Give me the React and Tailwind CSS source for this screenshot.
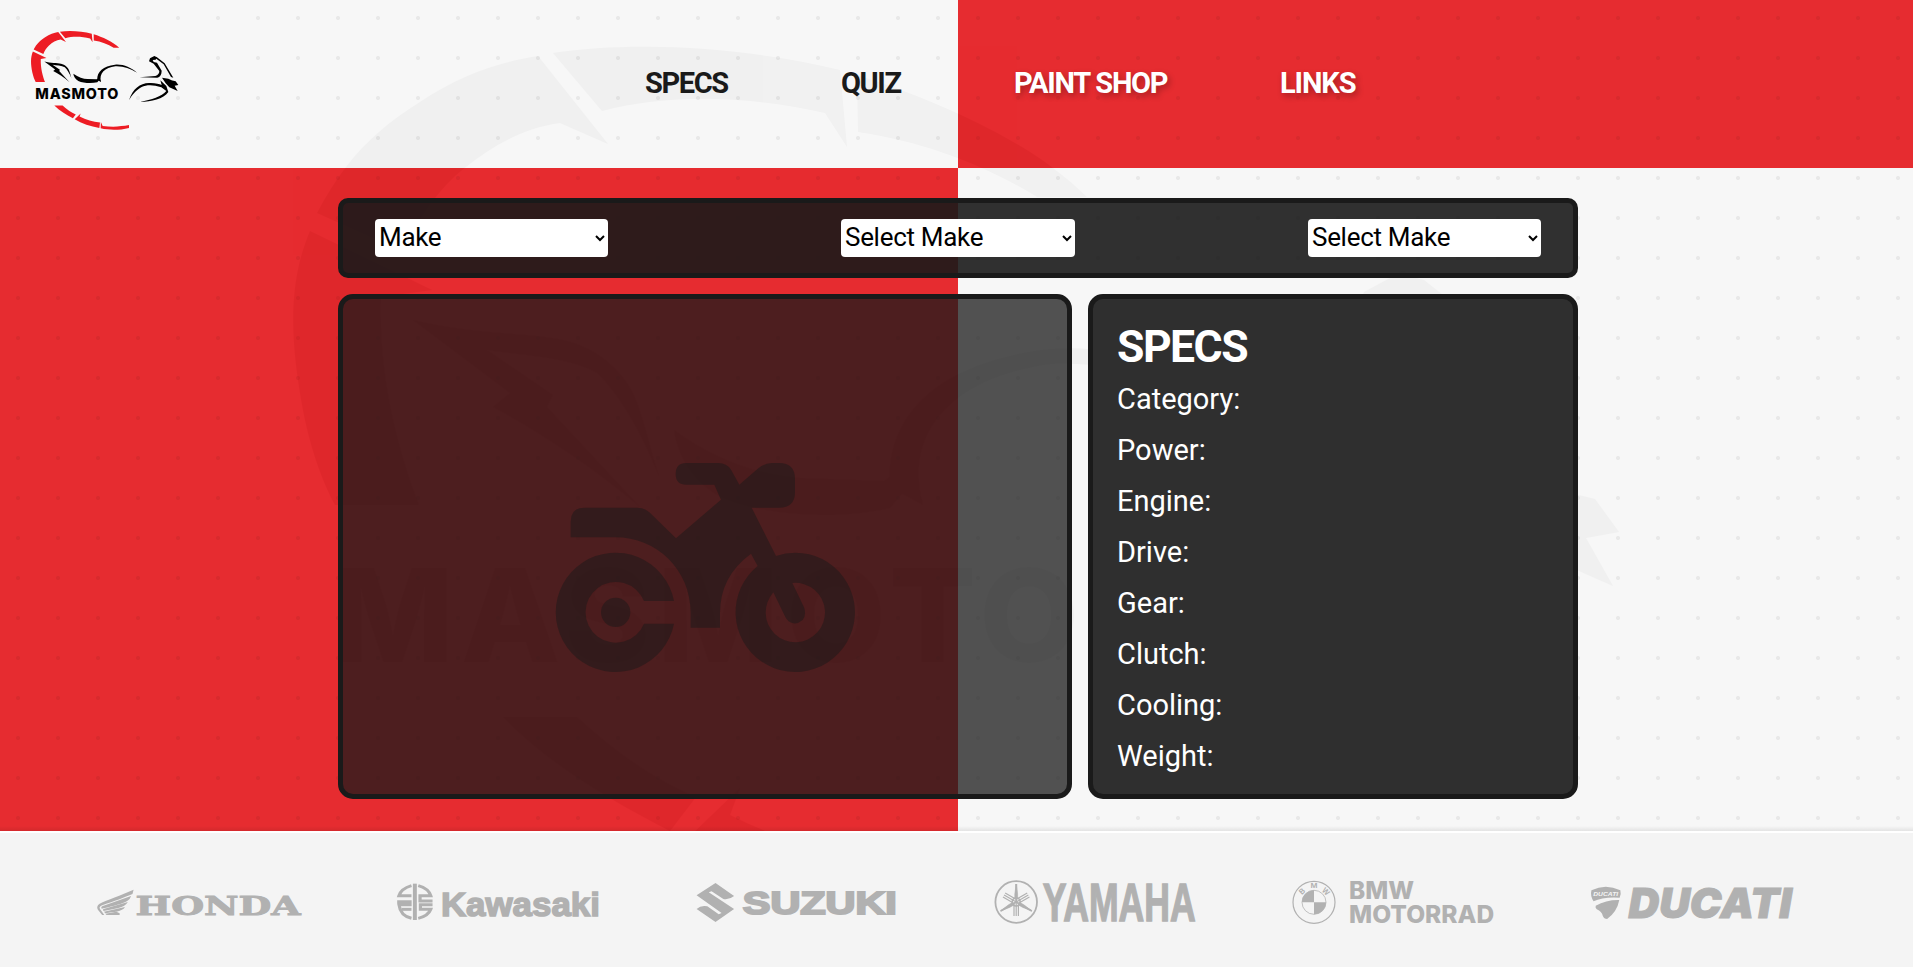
import React from "react";

const navLeft = [
  { label: "SPECS", cls: "w-[82px] tracking-[-1.4px]" },
  { label: "QUIZ", cls: "w-[59px] tracking-[-1.4px]" },
];
const navRight = [
  { label: "PAINT SHOP", cls: "w-[152px] tracking-[-1.25px]" },
  { label: "LINKS", cls: "w-[75px] tracking-[-1.1px]" },
];

const specs = ["Category:", "Power:", "Engine:", "Drive:", "Gear:", "Clutch:", "Cooling:", "Weight:"];

/* Speedometer ring, bike silhouette and wordmark, shared by header and watermark. */
function LogoArt({ ring, ink }) {
  return (
    <>
      <g fill={ring}>
        <path d="M310 231 C287 285 290 345 305 420 C313 456 324 485 335 505 H419 C400 455 378 380 381 297 L432 290 Z" />
        <path d="M317 213 C345 160 375 130 420 102 C460 75 500 62 538 56 L608 144 L560 123 C520 128 485 150 455 176 C430 200 415 225 404 252 Z" />
        <path d="M553 53 C640 40 750 48 840 70 L847 147 L825 113 C750 96 670 93 602 111 Z" />
        <path d="M857 75 C935 100 1030 140 1087 197 H1037 C985 165 925 142 858 132 Z" />
        <path d="M503 717 H577 C615 752 655 780 696 797 L670 831 C610 800 550 765 503 717 Z" />
        <path d="M686 840 L740 788 L730 815 C790 845 850 862 914 870 L908 918 C830 905 750 880 686 840 Z" />
        <path d="M922 864 L938 900 C1020 912 1100 907 1175 893 V918 C1090 940 1000 940 920 922 Z" />
      </g>
      <g fill={ink}>
        <path d="M413 320 C470 334 530 333 563 340 C600 348 628 375 638 405 C648 435 652 455 659 476 C640 430 620 395 597 373 C570 357 520 355 487 350 L553 395 L547 407 L640 507 C590 465 540 432 493 407 L510 393 Z" />
        <g transform="translate(14 -233) scale(3)">
          <path d="M220 221 C235 232 250 236 262 237 L290 238 L297 233 L303 245 L297 241 L292 247 C275 251 250 250 235 243 C226 238 221 229 220 221 Z" />
          <path d="M292 240 C290 215 310 198 345 194 C370 192 392 202 411 218 C390 205 370 198 346 199 C315 203 296 220 303 246 Z" />
          <path d="M419 232 L466 228 C474 226 478 220 478 213 L461 191 L447 184 L450 175 L463 168 L470 173 L467 179 L458 180 L461 186 L471 188 L485 212 C485 224 480 231 472 233 Z" />
          <path d="M462 169 L470 171 L494 190 L520 233 L513 231 L491 193 L466 174 Z" />
          <path d="M486 233 L505 236 L518 242 L498 237 L527 244 L535 255 L524 257 L533 273 L508 262 L497 250 Z" />
          <path d="M387 301 C398 266 420 250 447 249 C465 248 478 252 485 255 L481 241 L499 258 L505 276 C490 297 455 305 420 306 C455 299 485 290 499 273 L484 262 C460 254 440 254 425 261 C408 270 395 286 387 301 Z" />
        </g>
        <text
          x="332"
          y="662"
          fontFamily="Inter, 'Open Sans', sans-serif"
          fontWeight="800"
          fontSize="129"
          textLength="747"
          lengthAdjust="spacing"
        >
          MASMOTO
        </text>
      </g>
    </>
  );
}

function BikeIcon() {
  return (
    <svg viewBox="48 70 897 627" className="mt-[41px] h-[209px] w-[299px] overflow-visible opacity-50" fill="#1a1a1a">
      <path d="M92 293 V246 Q92 204 134 204 H292 Q312 204 328 218 L408 296 L543 180 L523 135 H439 Q407 135 407 103 Q407 70 439 70 H535 Q560 70 573 90 L598 135 L655 86 Q674 70 696 70 H717 Q765 70 765 118 V157 Q765 204 717 204 H635 L708 349 Q736 339 766 339 A179 179 0 1 1 653 379 L633 342 Q540 410 540 520 V564 H452 V520 C452 390 350 293 226 293 Z M700 458 Q677 486 677 519 A89 89 0 1 0 757 430 L792 503 Q800 526 788 541 Q774 553 760 551 Q744 548 736 532 Z" fillRule="evenodd" />
      <path d="M402 484 A179 179 0 1 0 402 552 H312 A91 91 0 1 1 312 484 Z" />
      <circle cx="227" cy="518" r="44" />
    </svg>
  );
}

const sans = "'Liberation Sans', Arial, sans-serif";

function Word({ x, y, size, len, children, ...rest }) {
  return (
    <text x={x} y={y} fontSize={size} textLength={len} lengthAdjust="spacingAndGlyphs" fontFamily={sans} fontWeight="700" {...rest}>
      {children}
    </text>
  );
}

function Brand({ x, children }) {
  return (
    <svg viewBox={`${x} 872 203 60`} className="h-[60px] w-[203px] overflow-visible" fill="#b1b1b1">
      {children}
    </svg>
  );
}

function Brands() {
  return (
    <>
      <Brand x={97}>
        <g transform="translate(80 860) scale(.35714 .33333)">
          <path d="M150 89 C115 106 75 120 55 131 C47 137 46 144 53 153 L62 165 H68 L56 147 C53 141 56 138 64 135 C95 124 125 112 147 102 Z" />
          <path d="M143 108 L64 138 Q57 141 61 146 L66 145 C95 137 118 132 133 122 Q141 117 143 108 Z" />
          <path d="M134 126 L66 147 Q62 149 66 153 C95 147 125 144 134 126 Z" />
          <path d="M126 141 L67 155 L71 160 C95 155 118 156 126 141 Z" />
          <path d="M71 161 L102 155 L111 160 V165 H74 Z" />
        </g>
        <Word x={135.5} y={914.5} size={26} len={165} fontFamily="'DejaVu Serif', serif" stroke="#b1b1b1" strokeWidth="0.9">HONDA</Word>
      </Brand>
      <Brand x={395.6}>
        <g transform="translate(80 860) scale(.35714 .33333)">
          <rect x="931" y="71" width="11" height="109" />
          <g fill="none" stroke="#b1b1b1" strokeWidth="9">
            <path d="M927 77 C908 83 896 94 892 107 H927" />
            <path d="M887 125 H923 V134 H892 C895 160 910 171 927 175" />
            <path d="M927 148 H899" />
            <path d="M946 77 C966 83 977 94 981 107 H951 V123 H986" />
            <path d="M986 134 H952 V148 H981 C977 160 966 170 946 175" />
          </g>
        </g>
        <Word x={440.5} y={915.6} size={34} len={159} stroke="#b1b1b1" strokeWidth="1.5">Kawasaki</Word>
      </Brand>
      <Brand x={694.2}>
        <g transform="translate(660 860) scale(.35714 .33333)">
          <path d="M156 69 L208 108 Q195 120 178 117 L145 94 L137 97 L208 147 L156 186 L103 147 Q115 135 133 139 L165 163 L173 159 L103 106 Z" />
        </g>
        <Word x={743} y={913.5} size={31} len={154} stroke="#b1b1b1" strokeWidth="2">SUZUKI</Word>
      </Brand>
      <Brand x={992.8}>
        <g fill="none" stroke="#b1b1b1">
          <circle cx="1016" cy="902" r="20.8" strokeWidth="1.8" />
          {[0, 120, 240].map((a) => (
            <g key={a} transform={`rotate(${a} 1016 902)`}>
              <path d="M1016 884 V902" strokeWidth="2" />
              <path d="M1014.6 894 L1016 884 L1017.4 894 V899 H1014.6 Z" fill="#b1b1b1" strokeWidth="0.6" />
              <path d="M1013.8 904.5 V916 M1016 902 V916 M1018.2 904.5 V916" strokeWidth="1.2" />
            </g>
          ))}
          <circle cx="1016" cy="902" r="4" strokeWidth="1.6" />
        </g>
        <Word x={1042.5} y={920.8} size={54} len={153} stroke="#b1b1b1" strokeWidth="1.4">YAMAHA</Word>
      </Brand>
      <Brand x={1291.4}>
        <g fill="none" stroke="#b1b1b1">
          <circle cx="1314.4" cy="902.3" r="21" strokeWidth="1.2" />
          <circle cx="1314.4" cy="902.3" r="12" strokeWidth="0.8" />
        </g>
        <path d="M1314.4 902.3 V890.3 A12 12 0 0 0 1302.4 902.3 Z M1314.4 902.3 V914.3 A12 12 0 0 0 1326.4 902.3 Z" />
        <Word x={1311} y={888.3} size={7} len={7}>M</Word>
        <Word x={-2.6} y={2.5} size={8} len={5.2} transform="translate(1302.6 891.3) rotate(-44)">B</Word>
        <Word x={-3.6} y={2.5} size={8} len={7} transform="translate(1326.2 891.6) rotate(44)">W</Word>
        <Word x={1349.5} y={899} size={24} len={65} fontFamily="Inter, sans-serif" fontWeight="800">BMW</Word>
        <Word x={1349.5} y={923} size={24} len={145} fontFamily="Inter, sans-serif" fontWeight="800">MOTORRAD</Word>
      </Brand>
      <Brand x={1590}>
        <g transform="translate(1260 860) scale(.35714 .33333)">
          <path d="M928 91 Q968 70 1009 91 Q1012 103 1007 113 Q960 110 934 124 Q924 108 928 91 Z" />
          <path d="M940 137 Q970 119 1006 120 Q1000 155 972 177 Q963 177 960 168 Q957 155 943 148 Q938 143 940 137 Z" />
          <text x="933" y="108" fill="#f4f4f4" fontFamily={sans} fontWeight="700" fontStyle="italic" fontSize="18" textLength="70" lengthAdjust="spacingAndGlyphs">DUCATI</text>
        </g>
        <Word x={1628.5} y={917.6} size={41} len={163} fontFamily="Inter, sans-serif" fontWeight="900" fontStyle="italic" stroke="#b1b1b1" strokeWidth="1">DUCATI</Word>
      </Brand>
    </>
  );
}

function Picker({ label, width }) {
  return (
    <select
      className={`h-[38px] ${width} rounded-[4px] bg-white pb-[2px] font-[Roboto,sans-serif] text-[26px] leading-[36px] tracking-[-0.3px] text-black`}
      defaultValue={label}
    >
      <option>{label}</option>
    </select>
  );
}

export default function App() {
  return (
    <div className="flex h-[967px] w-full flex-col overflow-hidden bg-[#f4f4f4] font-[Roboto,sans-serif]">
      <div className="relative h-[831px] w-full overflow-hidden">
        <div className="absolute inset-0 grid grid-cols-[958px_1fr] grid-rows-[168px_1fr]">
          <div className="bg-[#f7f7f7]" />
          <div className="bg-[#e62c30]" />
          <div className="bg-[#e62c30]" />
          <div className="bg-[#f7f7f7]" />
        </div>
        <div className="absolute inset-0 bg-[radial-gradient(circle_at_18px_18px,rgba(0,0,0,0.055)_1.6px,transparent_2.4px)] bg-[length:40px_40px]" />
        <svg className="absolute inset-0" width="1913" height="831" viewBox="0 0 1913 831">
          <defs>
            <g id="mark">
              <LogoArt />
            </g>
            <clipPath id="light">
              <path d="M0 0H958V168H0Z M958 168H1913V831H958Z" />
            </clipPath>
            <clipPath id="red">
              <path d="M958 0H1913V168H958Z M0 168H958V831H0Z" />
            </clipPath>
          </defs>
          <g clipPath="url(#light)">
            <use href="#mark" fill="#000" opacity="0.024" />
          </g>
          <g clipPath="url(#red)">
            <use href="#mark" fill="#b00008" opacity="0.11" />
          </g>
        </svg>

        <div className="relative flex h-full flex-col">
          <header className="flex h-[168px] items-start">
            <svg className="mt-[30px] ml-[30px] h-[102px] w-[150px] shrink-0" viewBox="284 37 1350 918">
              <LogoArt ring="#ed1c24" ink="#000" />
            </svg>
            <nav className="mt-[61px] ml-[465px] flex gap-[114px] text-[29px] leading-[44px] font-bold whitespace-nowrap">
              {navLeft.map((n) => (
                <a key={n.label} className={`text-[#1a1a1a] ${n.cls}`}>{n.label}</a>
              ))}
              {navRight.map((n) => (
                <a key={n.label} className={`text-white [text-shadow:2px_3px_6px_rgba(0,0,0,0.3)] ${n.cls}`}>{n.label}</a>
              ))}
            </nav>
          </header>

          <main className="mt-[30px] ml-[338px] flex w-[1240px] flex-col gap-4">
            <section className="flex h-[80px] items-center justify-between rounded-[10px] border-5 border-[#1a1a1a] bg-[#1a1a1a]/90 px-[32px]">
              <Picker label="Make" width="w-[233px]" />
              <Picker label="Select Make" width="w-[234px]" />
              <Picker label="Select Make" width="w-[233px]" />
            </section>
            <div className="flex h-[505px] gap-4">
              <section className="flex w-[734px] items-center justify-center rounded-[15px] border-5 border-[#1a1a1a] bg-[#1a1a1a]/75">
                <BikeIcon />
              </section>
              <section className="flex w-[490px] flex-col rounded-[15px] border-5 border-[#1a1a1a] bg-[#2f2f2f] pt-[21px] pl-[24px] text-white">
                <h2 className="h-[53px] text-[44.5px] leading-[54px] font-bold tracking-[-1.5px]">SPECS</h2>
                <ul className="pt-px">
                  {specs.map((s) => (
                    <li key={s} className="h-[51px] text-[29px] leading-[51px]">{s}</li>
                  ))}
                </ul>
              </section>
            </div>
          </main>
        </div>
        <div className="absolute inset-x-0 bottom-0 h-[5px] bg-linear-to-b from-black/0 to-black/8" />
      </div>
      <footer className="flex h-[136px] items-start justify-between border-t-2 border-white bg-[#f4f4f4] pt-[39px] pr-[120px] pl-[97px]">
        <Brands />
      </footer>
    </div>
  );
}
